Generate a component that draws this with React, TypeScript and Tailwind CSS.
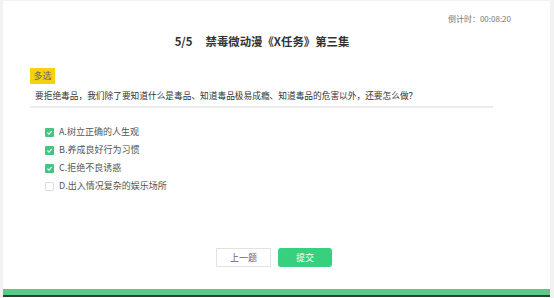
import React from "react";

const font = { fontFamily: '"Microsoft YaHei", "Noto Sans CJK SC", "Noto Sans", sans-serif' };

function Check({ checked }: { checked: boolean }) {
  return checked ? (
    <span className="flex h-[9px] w-[9px] items-center justify-center rounded-[1px] bg-[#45c583]">
      <svg width="7" height="7" viewBox="0 0 10 10">
        <path d="M2 5.2 L4.2 7.3 L8 3" fill="none" stroke="#fff" strokeWidth="1.6" />
      </svg>
    </span>
  ) : (
    <span className="h-[9px] w-[9px] rounded-[1px] border border-[#dcdcdc] bg-white" />
  );
}

const options = [
  { t: "A.树立正确的人生观", c: true },
  { t: "B.养成良好行为习惯", c: true },
  { t: "C.拒绝不良诱惑", c: true },
  { t: "D.出入情况复杂的娱乐场所", c: false },
];

export default function App() {
  return (
    <div className="flex h-[298px] w-[554px] flex-col bg-[#f2f2f2] pl-[3px] pr-[4px] pt-[1px]" style={font}>
      <div className="flex flex-1 flex-col bg-white">
        <div className="mt-[13px] flex h-[10px] justify-end pr-[39px] text-[8px] leading-[10px] text-[#777]">
          倒计时：00:08:20
        </div>
        <div className="mt-[8px] flex h-[18px] items-center justify-center pr-[29px] text-[11.4px] font-bold leading-[18px] text-[#333]">
          <span>5/5</span>
          <span className="ml-[13px]">禁毒微动漫《X任务》第三集</span>
        </div>
        <div className="ml-[27px] mt-[18px] w-[463px]">
          <div className="flex h-[16px] w-[25px] items-center justify-center bg-[#f6d10e] text-[9px] text-[#666]">
            多选
          </div>
          <div className="mt-[6px] h-[12px] pl-[5px] text-[8.7px] leading-[12px] text-[#333]">
            要拒绝毒品，我们除了要知道什么是毒品、知道毒品极易成瘾、知道毒品的危害以外，还要怎么做？
          </div>
          <div className="mt-[4px] h-[2px] bg-[#ececec]" />
        </div>
        <div className="ml-[42px] mt-[15px] flex flex-col">
          {options.map((o) => (
            <div key={o.t} className="flex h-[18px] items-center gap-[5px] text-[9px] text-[#555]">
              <Check checked={o.c} />
              <span>{o.t}</span>
            </div>
          ))}
        </div>
        <div className="mt-[53px] flex justify-center gap-[7px] pr-[5px]">
          <button className="h-[19px] w-[55px] border border-[#e2e2e2] bg-white text-[9px] text-[#666]">上一题</button>
          <button className="h-[19px] w-[54px] rounded-[3px] bg-[#37d07f] text-[9px] text-white">提交</button>
        </div>
        <div className="mt-auto h-[6px] bg-[#5acb86]" />
        <div className="h-[1.5px] bg-[#3a3a3a]" />
        <div className="h-[1.5px] bg-white" />
      </div>
    </div>
  );
}
